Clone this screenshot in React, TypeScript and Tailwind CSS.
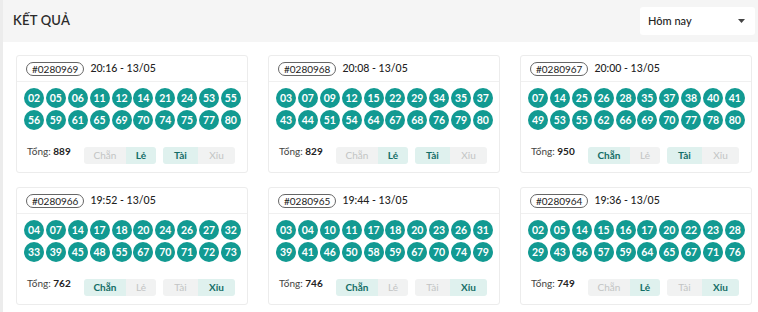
import React from "react";

type Draw = {
  id: string;
  time: string;
  balls: string[];
  total: number;
  even: boolean;
  big: boolean;
};

const draws: Draw[] = [
  {
    id: "#0280969",
    time: "20:16 - 13/05",
    balls: "02 05 06 11 12 14 21 24 53 55 56 59 61 65 69 70 74 75 77 80".split(" "),
    total: 889,
    even: false,
    big: true,
  },
  {
    id: "#0280968",
    time: "20:08 - 13/05",
    balls: "03 07 09 12 15 22 29 34 35 37 43 44 51 54 64 67 68 76 79 80".split(" "),
    total: 829,
    even: false,
    big: true,
  },
  {
    id: "#0280967",
    time: "20:00 - 13/05",
    balls: "07 14 25 26 28 35 37 38 40 41 49 53 55 62 66 69 70 77 78 80".split(" "),
    total: 950,
    even: true,
    big: true,
  },
  {
    id: "#0280966",
    time: "19:52 - 13/05",
    balls: "04 07 14 17 18 20 24 26 27 32 33 39 45 48 55 67 70 71 72 73".split(" "),
    total: 762,
    even: true,
    big: false,
  },
  {
    id: "#0280965",
    time: "19:44 - 13/05",
    balls: "03 04 10 11 17 18 20 23 26 31 39 41 46 50 58 59 67 70 74 79".split(" "),
    total: 746,
    even: true,
    big: false,
  },
  {
    id: "#0280964",
    time: "19:36 - 13/05",
    balls: "02 05 14 15 16 17 20 22 23 28 29 43 56 57 59 64 65 67 71 76".split(" "),
    total: 749,
    even: false,
    big: false,
  },
];

function Seg({ label, active, w }: { label: string; active: boolean; w: string }) {
  return (
    <span
      className={`${w} h-full flex items-center justify-center ${
        active
          ? "bg-[#dff1ee] text-[#136d66] font-bold"
          : "bg-[#f1f2f2] text-[#c2c4c4]"
      }`}
    >
      {label}
    </span>
  );
}

function DrawCard({ d }: { d: Draw }) {
  const rows = [d.balls.slice(0, 10), d.balls.slice(10, 20)];
  return (
    <div className="bg-white border border-[#ececec] rounded-[3px] h-[118px] flex flex-col">
      {/* header */}
      <div className="h-[26px] shrink-0 flex items-center gap-[6px] px-[9px] border-b border-[#f0f0f0]">
        <span className="h-[14px] px-[5px] flex items-center rounded-full border border-[#666] text-[10px] text-[#222] leading-none">
          {d.id}
        </span>
        <span className="text-[10.5px] text-[#222] font-medium">{d.time}</span>
      </div>

      {/* balls */}
      <div className="pt-[6px] pl-[7px] pr-[6px] flex flex-col gap-[2px]">
        {rows.map((row, i) => (
          <div key={i} className="flex justify-between">
            {row.map((b) => (
              <span
                key={b}
                className="w-[20px] h-[20px] rounded-full bg-[#129a92] text-white text-[10.5px] font-bold flex items-center justify-center leading-none"
              >
                {b}
              </span>
            ))}
          </div>
        ))}
      </div>

      {/* summary */}
      <div className="mt-[17px] pl-[10px] flex items-start">
        <span className="w-[57px] -mt-[3px] text-[10px] text-[#444]">
          Tổng: <b className="text-[#222] font-bold">{d.total}</b>
        </span>
        <div className="flex h-[17px] rounded-[3px] overflow-hidden text-[10px]">
          <Seg label="Chẵn" active={d.even} w="w-[42px]" />
          <Seg label="Lẻ" active={!d.even} w="w-[30px]" />
        </div>
        <div className="ml-[7px] flex h-[17px] rounded-[3px] overflow-hidden text-[10px]">
          <Seg label="Tài" active={d.big} w="w-[35px]" />
          <Seg label="Xỉu" active={!d.big} w="w-[37px]" />
        </div>
      </div>
    </div>
  );
}

export default function App() {
  return (
    <div
      className="w-[758px] h-[312px] bg-white border-l-[3px] border-[#ececec] overflow-hidden"
      style={{ fontFamily: "Lato, 'Noto Sans', sans-serif" }}
    >
      <div className="h-[42px] bg-[#f5f5f5] flex items-center justify-between pl-[10px] pr-[3px]">
        <h1 className="text-[13px] font-semibold text-[#2b2b2b] tracking-[0.2px]">KẾT QUẢ</h1>
        <button className="w-[115px] h-[28px] bg-white rounded-[3px] flex items-center justify-between pl-[8px] pr-[10px] text-[11px] text-[#222] font-medium">
          Hôm nay
          <svg width="7" height="4" viewBox="0 0 7 4">
            <path d="M0 0h7L3.5 4z" fill="#444" />
          </svg>
        </button>
      </div>
      <div className="pt-[13px] pl-[13px] pr-[6px] grid grid-cols-3 gap-x-[20px] gap-y-[14px]">
        {draws.map((d) => (
          <DrawCard key={d.id} d={d} />
        ))}
      </div>
    </div>
  );
}
